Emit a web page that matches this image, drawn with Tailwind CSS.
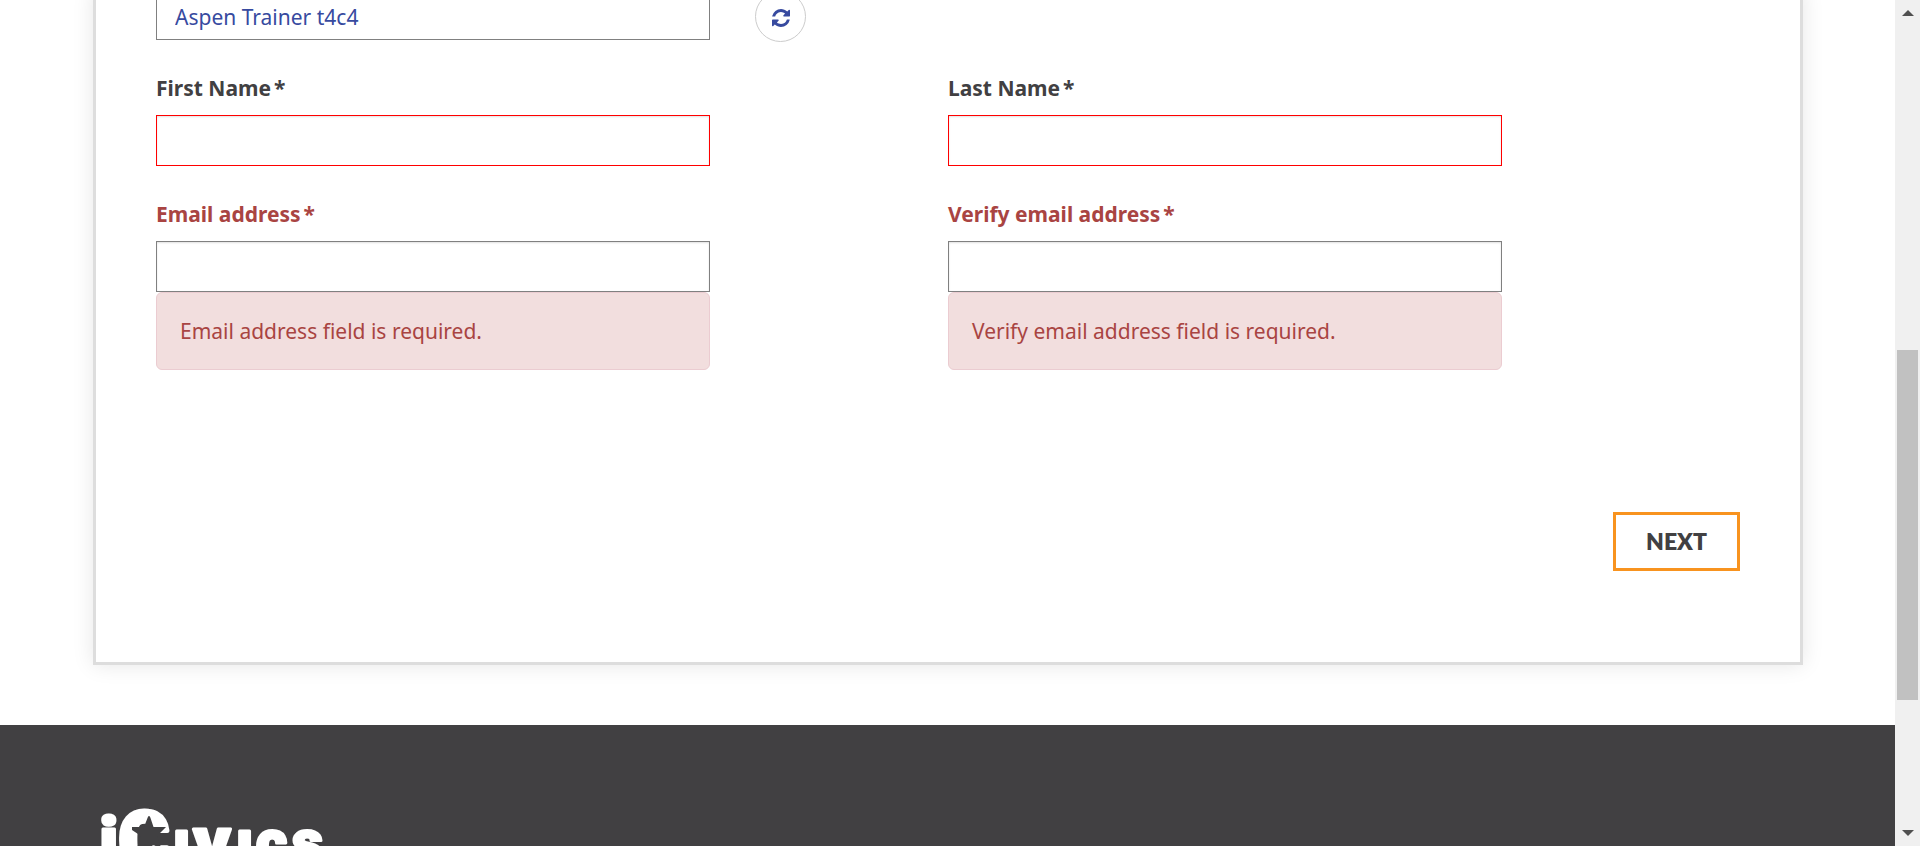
<!DOCTYPE html>
<html lang="en">
<head>
<meta charset="utf-8">
<meta name="viewport" content="width=device-width, initial-scale=1">
<title>iCivics registration</title>
<script src="https://cdn.jsdelivr.net/npm/@tailwindcss/browser@4"></script>
</head>
<body class="flex h-screen overflow-hidden bg-white font-['Noto_Sans',sans-serif] text-[21px] leading-[30px] text-[#414042]">
<div class="min-w-0 flex-1 overflow-hidden">
  <main class="-mt-[11px] pr-[92px] pb-[60px] pl-[93px]">
    <form class="border-x-[3px] border-b-[3px] border-[#dddddd] px-[60px] pb-[91px] shadow-[0_0_20px_rgba(0,0,0,0.1)]">
      <div class="grid grid-cols-2 gap-y-[33px]">
        <div class="col-span-2 grid grid-cols-2">
          <div class="flex items-center">
            <input type="text" aria-label="Username" value="Aspen Trainer t4c4" readonly class="h-[51px] w-[70%] border border-[#808080] px-[18px] pt-[4px] text-[#374a9f] outline-none">
            <button type="button" aria-label="Generate another username" class="-mb-[4px] ml-[45px] flex size-[51px] items-center justify-center rounded-full border border-[#cccccc] pt-[2px]">
              <svg class="size-[18px]" viewBox="0 0 1536 1536" fill="#374a9f" aria-hidden="true"><path d="M1511 928q0 5-1 7-64 268-268 434.500T764 1536q-146 0-282.500-55T238 1324l-129 129q-19 19-45 19t-45-19-19-45V960q0-26 19-45t45-19h448q26 0 45 19t19 45-19 45l-137 137q71 66 161 102t187 36q134 0 250-65t186-179q11-17 53-117 8-23 30-23h192q13 0 22.500 9.500t9.500 22.500zm25-800v448q0 26-19 45t-45 19h-448q-26 0-45-19t-19-45 19-45l138-138Q969 256 768 256q-134 0-250 65T332 500q-11 17-53 117-8 23-30 23H50q-13 0-22.500-9.500T18 608v-7q65-268 270-434.500T768 0q146 0 284 55.500T1297 212l130-129q19-19 45-19t45 19 19 45z"/></svg>
            </button>
          </div>
        </div>
        <div class="flex w-[70%] flex-col">
          <label for="first" class="mb-[12px] font-bold">First Name<span class="ml-[3px]">*</span></label>
          <input id="first" type="text" required class="h-[51px] border border-[#ff0000] px-[18px] shadow-[inset_0_1px_2px_rgba(0,0,0,0.12)] outline-none">
        </div>
        <div class="flex w-[70%] flex-col">
          <label for="last" class="mb-[12px] font-bold">Last Name<span class="ml-[3px]">*</span></label>
          <input id="last" type="text" required class="h-[51px] border border-[#ff0000] px-[18px] shadow-[inset_0_1px_2px_rgba(0,0,0,0.12)] outline-none">
        </div>
        <div class="flex w-[70%] flex-col text-[#a94442]">
          <label for="email" class="mb-[12px] font-bold">Email address<span class="ml-[3px]">*</span></label>
          <input id="email" type="email" required aria-describedby="email-error" class="h-[51px] border border-[#808080] px-[18px] shadow-[inset_0_1px_2px_rgba(0,0,0,0.12)] outline-none">
          <p id="email-error" class="rounded-[6px] border border-[#ebccd1] bg-[#f2dede] px-[23px] py-[23px]">Email address field is required.</p>
        </div>
        <div class="flex w-[70%] flex-col text-[#a94442]">
          <label for="verify" class="mb-[12px] font-bold">Verify email address<span class="ml-[3px]">*</span></label>
          <input id="verify" type="email" required aria-describedby="verify-error" class="h-[51px] border border-[#808080] px-[18px] shadow-[inset_0_1px_2px_rgba(0,0,0,0.12)] outline-none">
          <p id="verify-error" class="rounded-[6px] border border-[#ebccd1] bg-[#f2dede] px-[23px] py-[23px]">Verify email address field is required.</p>
        </div>
      </div>
      <div class="mt-[142px] flex justify-end">
        <button type="button" class="h-[59px] w-[127px] border-[3px] border-[#f8931f] pb-[2px] font-['Lato',sans-serif] text-[23px] font-extrabold">NEXT</button>
      </div>
    </form>
  </main>
  <footer class="bg-[#414042] px-[99px] pt-[83px] pb-[60px]">
    <a href="#" aria-label="iCivics home" class="block w-[228px]">
      <svg class="w-full" viewBox="0 0 228 66" fill="#fff" stroke="#fff" stroke-linejoin="round" font-weight="900" aria-hidden="true">
        <text y="54" font-size="60" stroke-width="3" font-family="Roboto,sans-serif"><tspan x="0" font-family="'Open Sans',sans-serif">i</tspan><tspan x="20" y="58" font-size="76" stroke-width="5">C</tspan><tspan x="74" y="54">ı</tspan><tspan x="94" font-family="Inter,sans-serif">v</tspan><tspan x="137 157 193">ıcs</tspan></text>
        <!-- Star cut into the initial -->
        <path stroke="none" fill="#414042" d="M50 8Q51 8 51.500 10L54.500 19H67L58 28L63 42L50 34L37 43L42 28L33 22V19H45L48.500 10Q49 8 50 8Z"/>
      </svg>
    </a>
  </footer>
</div>
<div class="flex w-[25px] flex-col bg-[#f0f0f0]">
  <button type="button" aria-label="Scroll up" class="flex h-[26px] items-center justify-center"><svg class="h-[6px] w-[12px]" viewBox="0 0 12 6" fill="#505050"><path d="M6 0L12 6H0Z"/></svg></button>
  <div class="grow-[324]"></div>
  <div class="mx-[2px] grow-[350] bg-[#c1c1c1]"></div>
  <div class="grow-[120]"></div>
  <button type="button" aria-label="Scroll down" class="flex h-[26px] items-center justify-center"><svg class="h-[6px] w-[12px]" viewBox="0 0 12 6" fill="#505050"><path d="M0 0H12L6 6Z"/></svg></button>
</div>
</body>
</html>
